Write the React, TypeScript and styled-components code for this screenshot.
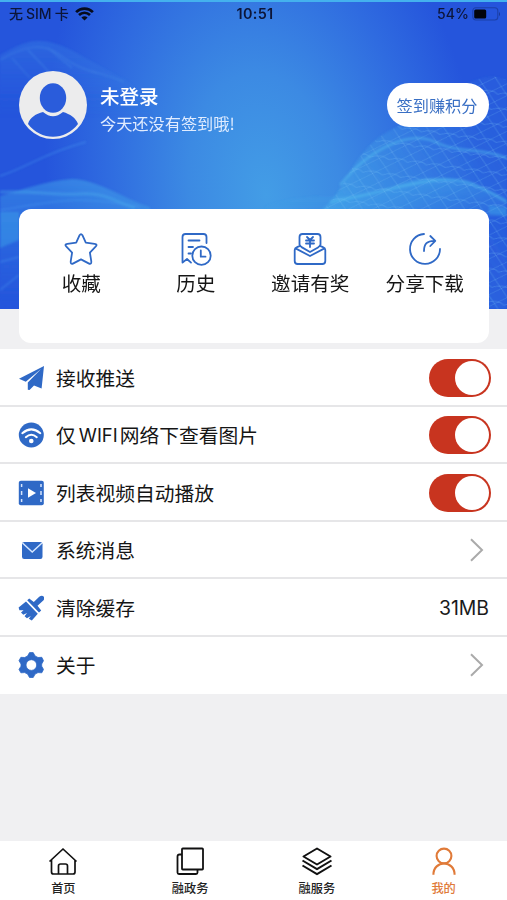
import React from "react";
import styled, { createGlobalStyle } from "styled-components";

const BLUE = "#2f69c6";
const CJK = '"Noto Sans CJK SC", "Noto Sans", sans-serif';
const LATIN = 'Inter, "Noto Sans CJK SC", sans-serif';

const GlobalStyle = createGlobalStyle`
  * { box-sizing: border-box; }
  body { margin: 0; background: #f0f0f2; font-family: ${CJK}; }
  svg { display: block; flex: none; }
`;

const Page = styled.div`
  width: 507px;
  height: 900px;
  display: flex;
  flex-direction: column;
  background: #f0f0f2;
  overflow: hidden;
`;

const Hero = styled.header`
  position: relative;
  height: 309px;
  flex: none;
  border-top: 2px solid #44b1ee;
  background: #2555dc;
`;

const Backdrop = styled.svg`
  position: absolute;
  inset: 0;
`;

const HeroContent = styled.div`
  position: relative;
`;

const StatusBar = styled.div`
  height: 24px;
  display: grid;
  grid-template-columns: 1fr auto 1fr;
  align-items: center;
  padding: 0 6px 0 9px;
  font-family: ${LATIN};
  font-size: 14px;
  font-weight: 500;
  line-height: 24px;
  color: #0c1538;
`;

const StatusSide = styled.div<{ $end?: boolean }>`
  display: flex;
  align-items: center;
  gap: ${(p) => (p.$end ? "3px" : "6px")};
  justify-content: ${(p) => (p.$end ? "flex-end" : "flex-start")};
  letter-spacing: ${(p) => (p.$end ? "0.1px" : "0")};
`;

const Carrier = styled.span`
  display: flex;
  gap: 3px;
  letter-spacing: 0;
`;

const Clock = styled.span`
  font-weight: 600;
  font-size: 14.4px;
  letter-spacing: 0.35px;
`;

const Profile = styled.div`
  display: flex;
  align-items: center;
  height: 70px;
  margin-top: 44px;
  padding: 0 18px 0 19px;
`;

const Names = styled.div`
  flex: 1;
  margin: 8px 0 0 13px;
  color: #fff;
`;

const UserName = styled.div`
  font-size: 19.5px;
  font-weight: 500;
  line-height: 28px;
`;

const Hint = styled.div`
  font-size: 16.2px;
  line-height: 26px;
  color: #e0ecff;
`;

const CheckIn = styled.button`
  width: 102px;
  height: 44px;
  border: 0;
  border-radius: 22px;
  padding: 0 2px 0 0;
  background: #fff;
  color: #396fc4;
  font-family: ${CJK};
  font-size: 16.2px;
  line-height: 43px;
  white-space: nowrap;
`;

const Card = styled.section`
  position: relative;
  flex: none;
  width: 470px;
  height: 134px;
  margin: -100px 0 0 19px;
  padding: 23px 7px 0 5px;
  display: grid;
  grid-template-columns: repeat(4, 1fr);
  background: #fff;
  border-radius: 12px;
`;

const Action = styled.div`
  display: flex;
  flex-direction: column;
  align-items: center;
  font-size: 19.6px;
  line-height: 28px;
  color: #151515;
  white-space: nowrap;
`;

const List = styled.main`
  margin-top: 6px;
  flex: none;
  background: #fff;
`;

const Row = styled.div`
  display: flex;
  align-items: center;
  height: 57.5px;
  padding: 2px 16px 0 18px;
  border-bottom: 2px solid #e6e6e8;
  &:last-child {
    border-bottom-color: #fff;
  }
`;

const Label = styled.div`
  flex: 1;
  display: flex;
  align-items: center;
  margin-left: 12px;
  font-size: 19.75px;
  line-height: 30px;
  color: #151515;
`;

const Latin = styled.span`
  font-family: ${LATIN};
  font-size: 18.4px;
  margin: 0 2px 0 3px;
`;

const Toggle = styled.div`
  width: 62px;
  height: 38px;
  border-radius: 19px;
  background: #c8341f;
  display: flex;
  align-items: center;
  justify-content: flex-end;
  padding-right: 2px;
`;

const Knob = styled.div`
  width: 34px;
  height: 34px;
  border-radius: 50%;
  background: #fff;
`;

const Value = styled.div`
  font-family: ${LATIN};
  font-size: 19.4px;
  color: #1a1a1a;
  margin-right: 2px;
`;

const TabBar = styled.nav`
  height: 59px;
  flex: none;
  margin-top: auto;
  display: grid;
  grid-template-columns: repeat(4, 1fr);
  background: #fff;
`;

const Tab = styled.div<{ $active?: boolean }>`
  display: flex;
  flex-direction: column;
  align-items: center;
  padding-top: 4px;
  font-size: 12.2px;
  font-weight: 500;
  line-height: 22px;
  color: ${(p) => (p.$active ? "#e07a38" : "#222")};
`;

const hills = {
  right: "M318 212C338 202 350 165 366 150C378 134 400 125 424 115C452 92 474 75 496 77L507 80V309H300Z",
  leftTop: "M0 55C15 47 27 40 40 41C65 42 84 59 123 78C145 90 150 120 180 150L0 170Z",
  leftLow: "M0 196C25 189 45 181 72 179C98 180 118 196 150 207V309H0Z",
};

const HeroBackdrop = () => (
  <Backdrop width="507" height="307" viewBox="0 2 507 307">
    <defs>
      <radialGradient id="glow" gradientUnits="userSpaceOnUse" cx="0" cy="0" r="1" gradientTransform="translate(266 195) rotate(-8) scale(218 350)">
        <stop offset="0" stopColor="#439de6" />
        <stop offset="0.35" stopColor="#3c8ae3" />
        <stop offset="0.72" stopColor="#2f6be0" />
        <stop offset="1" stopColor="#2555dc" />
      </radialGradient>
      <linearGradient id="ridge" x1="0" y1="1" x2="1" y2="0.2">
        <stop offset="0" stopColor="#49bbed" stopOpacity="0.85" />
        <stop offset="0.45" stopColor="#419ee8" stopOpacity="0.55" />
        <stop offset="1" stopColor="#347fe3" stopOpacity="0.2" />
      </linearGradient>
      <linearGradient id="haze" x1="0" y1="0" x2="0" y2="1">
        <stop offset="0" stopColor="#4aa5ed" stopOpacity="0.22" />
        <stop offset="0.6" stopColor="#2f75e2" stopOpacity="0" />
      </linearGradient>
      <linearGradient id="band" x1="0" y1="0" x2="0" y2="1">
        <stop offset="0" stopColor="#4abbee" stopOpacity="0.4" />
        <stop offset="1" stopColor="#358ce5" stopOpacity="0" />
      </linearGradient>
      <pattern id="mesh" width="19" height="16" patternUnits="userSpaceOnUse" patternTransform="rotate(8) skewX(-16)">
        <path d="M0 0L19 16M19 0L0 16M0 8Q10 3 19 8" fill="none" stroke="#74bff5" strokeWidth="0.8" opacity="0.38" />
      </pattern>
      <clipPath id="rightHill">
        <path d={hills.right} />
      </clipPath>
      <filter id="soft" x="-10%" y="-10%" width="120%" height="120%">
        <feGaussianBlur stdDeviation="1" />
      </filter>
      <filter id="fine">
        <feGaussianBlur stdDeviation="0.45" />
      </filter>
    </defs>
    <rect y="2" width="507" height="307" fill="url(#glow)" />
    <g filter="url(#soft)">
      <path d={hills.leftTop} fill="url(#haze)" />
      <path d={hills.leftLow} fill="url(#band)" />
      <path d="M0 176C30 166 44 153 86 142M0 210C45 204 72 193 140 207M0 262L19 257M0 290L19 275" fill="none" stroke="#4a9af0" strokeWidth="1.4" opacity="0.45" />
      <path d="M0 192C30 190 55 196 80 194S115 202 135 208" fill="none" stroke="#4aaeee" strokeWidth="3" opacity="0.4" />
      <path d="M0 60C25 45 45 42 63 57S105 73 124 82M12 58L30 78M28 50L50 73M48 48L72 68" fill="none" stroke="#65b3ef" strokeWidth="1.1" opacity="0.25" />
      <path d={hills.right} fill="url(#ridge)" />
      <path d="M265 207C310 188 350 204 390 188C430 170 470 178 507 199V225C450 202 380 206 265 212Z" fill="url(#band)" />
      <path d="M340 185C370 148 410 130 435 142S480 147 507 158M330 202C370 195 395 186 430 181S475 184 507 202" fill="none" stroke="#55c0ef" strokeWidth="2.4" opacity="0.5" />
      <path d="M0 212H19V240L0 248ZM489 205L507 208V216L489 214Z" fill="#3b9be8" opacity="0.55" />
      <path d="M485 216H512V312H485Z" fill="#2656dc" opacity="0.6" />
    </g>
    <g clipPath="url(#rightHill)" filter="url(#fine)">
      <rect x="300" y="70" width="207" height="239" fill="url(#mesh)" />
    </g>
  </Backdrop>
);

const StatusWifi = () => (
  <svg width="19" height="14" viewBox="0 0 19 14" fill="none" stroke="#060b1c" strokeWidth="2.7">
    <path d="M1.1 5.1C5.8.5 13.2.5 17.9 5.1M4 8C7.2 5 11.8 5 15 8" />
    <path d="M9.5 13.6L6.4 10.5Q9.5 8 12.6 10.5Z" fill="#060b1c" stroke="none" />
  </svg>
);

const Battery = () => (
  <svg width="29" height="14" viewBox="0 0 29 14">
    <rect x="0.8" y="0.8" width="25" height="12.2" rx="3" fill="none" stroke="#183894" strokeOpacity="0.7" strokeWidth="1.1" />
    <rect x="2.2" y="2.4" width="12" height="9" rx="1.5" fill="#02040c" />
    <path d="M27 4.7Q29 7 27 9.3Z" fill="#183894" />
  </svg>
);

const Avatar = () => (
  <svg width="68" height="68" viewBox="0 0 68 68">
    <circle cx="34" cy="34" r="34" fill="#ececed" />
    <ellipse cx="34" cy="27" rx="13.2" ry="14.7" fill="#2a5cdb" />
    <path d="M9 53C11 46 17 43 24 41Q34 49.5 44 41C51 43 57 47 59 53C46 70 22 70 9 53Z" fill="#2a5cdb" />
  </svg>
);

const actionSvg = {
  width: 34,
  height: 37,
  viewBox: "0 0 34 37",
  fill: "none",
  stroke: BLUE,
  strokeWidth: 1.8,
  strokeLinecap: "round" as const,
  strokeLinejoin: "round" as const,
};

const StarIcon = () => (
  <svg {...actionSvg}>
    <path d="M15.6 3.2Q17 1 18.4 3.2L21.8 10.7L30.6 11.8Q34 12.3 31.6 14.7L25.9 20.6L27.3 29.4Q27.6 32.9 24.6 31.4L17 27.4L9.4 31.4Q6.4 32.9 6.7 29.4L8.1 20.6L2.4 14.7Q0 12.3 3.4 11.8L12.2 10.7Z" />
  </svg>
);

const HistoryIcon = () => (
  <svg {...actionSvg}>
    <path d="M27.5 11V5Q27.5 2 24.5 2H6.5Q3.5 2 3.5 5V30.6L8 27L12 30.6M9.5 8.5H20.5M9.5 15H14M9.5 21.5H12" />
    <circle cx="22.5" cy="23.7" r="9.2" />
    <path d="M21.8 18.5V24.7H26.5" />
  </svg>
);

const InviteIcon = () => (
  <svg {...actionSvg}>
    <path d="M6.5 12.5V5Q6.5 2 9.5 2H24.5Q27.5 2 27.5 5V12.5Q27 14.2 25 15.4L17 20L9 15.4Q7 14.2 6.5 12.5Z" />
    <path d="M6.5 14.2L4 15.2Q1.7 16 1.7 18V29Q1.7 32 4.7 32H29.3Q32.3 32 32.3 29V18Q32.3 16 30 15.2L27.5 14.2M3 16.6L17 24L31 16.6" />
    <path d="M14 5L17 8L20 5M13 8.5H21M13 11.5H21M17 8V15" />
  </svg>
);

const ShareIcon = () => (
  <svg {...actionSvg}>
    <path d="M16 2A15 15 0 1 0 32 17" />
    <path d="M16 19C16 12 19 8.5 27 8.8M22.3 4L27.3 8.8L22.3 14" />
  </svg>
);

const rowSvg = { width: 26, height: 26, viewBox: "0 0 26 26", fill: BLUE };

const PlaneIcon = () => (
  <svg {...rowSvg}>
    <path d="M26 1L23.6 23.5L16 20.6L11.5 25L9.8 24.7V17.6L23 4L7.8 16.8L1 13.8Z" />
  </svg>
);

const WifiIcon = () => (
  <svg {...rowSvg}>
    <circle cx="13.3" cy="13" r="12.5" />
    <path d="M4.3 11.2Q13.3 3.5 22.3 11.2M7.8 15.2Q13.3 10.2 18.8 15.2" fill="none" stroke="#fff" strokeWidth="2" strokeLinecap="round" />
    <circle cx="13.3" cy="19" r="2.3" fill="#fff" />
  </svg>
);

const VideoIcon = () => (
  <svg {...rowSvg}>
    <rect x="0.8" y="0.7" width="25" height="24.6" rx="2" />
    <path d="M10 8.2L18 13L10 17.8Z" fill="#fff" />
    <path d="M3.6 4V7M3.6 11V15M3.6 19V22M23 4V7M23 11V15M23 19V22" stroke="#d6e4fb" strokeWidth="1.5" />
  </svg>
);

const MailIcon = () => (
  <svg {...rowSvg}>
    <rect x="4" y="5" width="20.5" height="17" rx="2.2" />
    <path d="M4.5 6L14.2 15L24 6" fill="none" stroke="#d5e7ff" strokeWidth="1.5" />
  </svg>
);

const BrushIcon = () => (
  <svg {...rowSvg}>
    <path d="M9.2 5.2L11.2 3.4L15.8 6.9L21.2 1.7Q24 -0.2 25.6 1.5T25.3 5.6L19.5 10.8L23.2 15.4L21 17.6Z" />
    <path d="M8 6.6L19.8 18.8L13.8 25.6L10.8 23.7L12.8 20.9L8.9 23.3L6.6 21.2L9 18.1L5.3 19.8L3 17.4L5.6 15.2L1.4 15.3L.6 12.6Z" />
  </svg>
);

const GearIcon = () => (
  <svg {...rowSvg}>
    <path
      fillRule="evenodd"
      d="M11.5.6H15.2L17.1 4L20 5.5L23.8 5.3L25.5 8.7L23.7 12V14.2L25.5 17.4L23.8 20.8L20 20.6L17.1 22.1L15.2 25.5H11.5L9.6 22.1L6.7 20.6L2.9 20.8L1 17.4L3 14.2V12L1 8.7L2.9 5.3L6.7 5.5L9.6 4ZM13.35 7.7A5.35 5.35 0 1 0 13.35 18.4A5.35 5.35 0 1 0 13.35 7.7Z"
      stroke={BLUE}
      strokeWidth="0.8"
      strokeLinejoin="round"
    />
  </svg>
);

const Chevron = () => (
  <svg width="21" height="24" viewBox="0 0 21 24" fill="none" stroke="#aaa" strokeWidth="2">
    <path d="M1 1.2L12 12L1 22.8" />
  </svg>
);

const tabSvg = { width: 32, height: 32, viewBox: "0 0 32 32", fill: "none", stroke: "#111", strokeWidth: 1.8, strokeLinejoin: "round" as const };

const HomeIcon = () => (
  <svg {...tabSvg} strokeWidth={1.7}>
    <path d="M2.5 16.5L16 4L29.5 16.5M4.5 15V27Q4.5 29 6.5 29H26Q28 29 28 27V15M11.5 29V21Q11.5 19 13.5 19H18.5Q20.5 19 20.5 21V29" />
  </svg>
);

const PagesIcon = () => (
  <svg {...tabSvg}>
    <rect x="8" y="3.5" width="21" height="21" rx="0.8" />
    <path d="M8 9.5H5.5Q3.5 9.5 3.5 11.5V27.5Q3.5 29 5 29H22Q23.5 29 23.5 27.5V24.5" />
  </svg>
);

const LayersIcon = () => (
  <svg {...tabSvg} strokeWidth={2}>
    <path d="M16 3.5L29.5 11.5L16 19.5L2.5 11.5ZM1.5 15.5L16 24.2L30.5 15.5M1.5 20.5L16 29.2L30.5 20.5" />
  </svg>
);

const PersonIcon = () => (
  <svg {...tabSvg} stroke="#e07a38" strokeWidth={2.1}>
    <circle cx="16" cy="11" r="7.4" />
    <path d="M5.4 29.8C5.4 14.8 26.6 14.8 26.6 29.8" />
  </svg>
);

const Switch = () => (
  <Toggle role="switch" aria-checked="true">
    <Knob />
  </Toggle>
);

const actions = [
  { icon: <StarIcon />, label: "收藏" },
  { icon: <HistoryIcon />, label: "历史" },
  { icon: <InviteIcon />, label: "邀请有奖" },
  { icon: <ShareIcon />, label: "分享下载" },
];

const rows = [
  { icon: <PlaneIcon />, label: "接收推送", end: <Switch /> },
  { icon: <WifiIcon />, label: <>仅<Latin>WIFI</Latin>网络下查看图片</>, end: <Switch /> },
  { icon: <VideoIcon />, label: "列表视频自动播放", end: <Switch /> },
  { icon: <MailIcon />, label: "系统消息", end: <Chevron /> },
  { icon: <BrushIcon />, label: "清除缓存", end: <Value>31MB</Value> },
  { icon: <GearIcon />, label: "关于", end: <Chevron /> },
];

const tabs = [
  { icon: <HomeIcon />, label: "首页" },
  { icon: <PagesIcon />, label: "融政务" },
  { icon: <LayersIcon />, label: "融服务" },
  { icon: <PersonIcon />, label: "我的", active: true },
];

export default function App() {
  return (
    <>
      <GlobalStyle />
      <Page>
        <Hero>
          <HeroBackdrop />
          <HeroContent>
            <StatusBar>
              <StatusSide>
                <Carrier>
                  <span>无</span>
                  <span>SIM</span>
                  <span>卡</span>
                </Carrier>
                <StatusWifi />
              </StatusSide>
              <Clock>10:51</Clock>
              <StatusSide $end>
                <span>54%</span>
                <Battery />
              </StatusSide>
            </StatusBar>
            <Profile>
              <Avatar />
              <Names>
                <UserName>未登录</UserName>
                <Hint>今天还没有签到哦!</Hint>
              </Names>
              <CheckIn>签到赚积分</CheckIn>
            </Profile>
          </HeroContent>
        </Hero>
        <Card>
          {actions.map((a) => (
            <Action key={a.label}>
              {a.icon}
              {a.label}
            </Action>
          ))}
        </Card>
        <List>
          {rows.map((r, i) => (
            <Row key={i}>
              {r.icon}
              <Label>{r.label}</Label>
              {r.end}
            </Row>
          ))}
        </List>
        <TabBar>
          {tabs.map((t) => (
            <Tab key={t.label} $active={t.active}>
              {t.icon}
              {t.label}
            </Tab>
          ))}
        </TabBar>
      </Page>
    </>
  );
}
